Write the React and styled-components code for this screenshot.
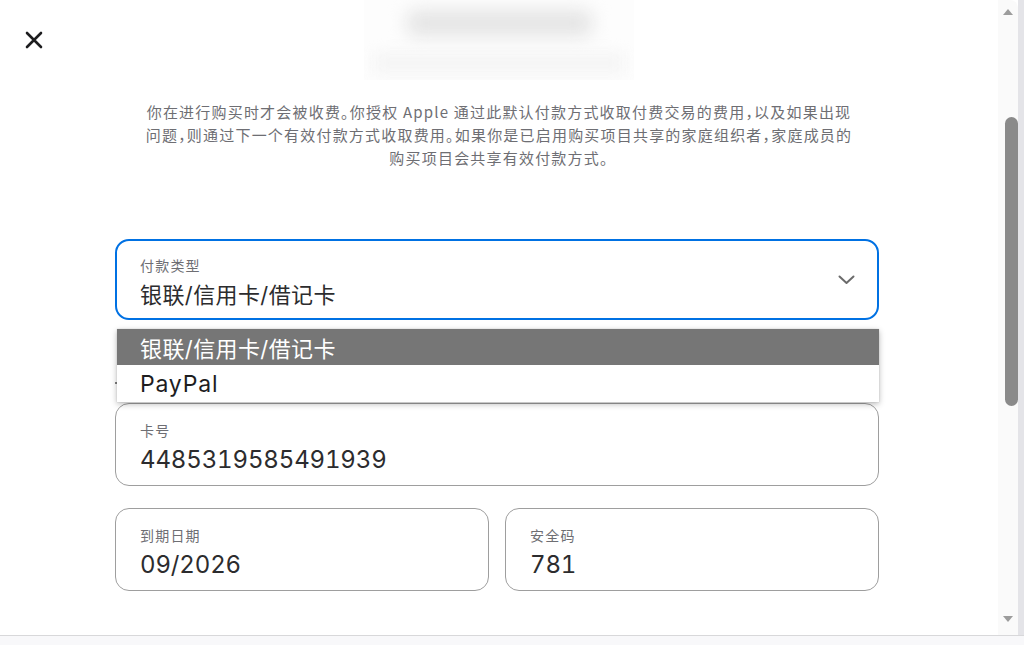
import React from "react";
import styled, { createGlobalStyle } from "styled-components";

const GlobalStyle = createGlobalStyle`
  html, body { margin: 0; padding: 0; background: #ffffff; overflow: hidden; }
  * { box-sizing: border-box; }
  body { font-family: "Inter", "Noto Sans CJK SC", sans-serif; color: #1d1d1f; }
`;

const Window = styled.div`
  width: 1024px;
  height: 645px;
  display: flex;
  flex-direction: column;
  background: #ffffff;
`;

const Main = styled.div`
  flex: 1;
  display: flex;
  min-height: 0;
`;

const Content = styled.div`
  flex: 1;
  display: flex;
  flex-direction: column;
  min-width: 0;
`;

const Header = styled.div`
  height: 80px;
  display: grid;
  grid-template-columns: 1fr 270px 1fr;
  align-items: start;
`;

const CloseButton = styled.button`
  width: 28px;
  height: 28px;
  margin: 26px 0 0 20px;
  padding: 0;
  border: none;
  background: transparent;
  display: flex;
  align-items: center;
  justify-content: center;
  cursor: pointer;
`;

const BlurZone = styled.div`
  height: 80px;
  overflow: hidden;
  background: #fdfdfd;
`;

const BlurBar = styled.div`
  margin: 10px auto 0;
  width: 185px;
  height: 26px;
  border-radius: 8px;
  background: #e4e4e4;
  filter: blur(9px);
`;

const BlurSub = styled.div`
  margin: 16px auto 0;
  width: 250px;
  height: 22px;
  background: #f5f5f5;
  filter: blur(7px);
`;

const Notice = styled.p`
  margin: 20px auto 0;
  width: 715px;
  text-align: center;
  font-size: 15px;
  line-height: 23px;
  letter-spacing: 1.2px;
  color: #6e6e73;
  font-family: "Noto Sans CJK SC", sans-serif;
  font-feature-settings: "halt";
`;

const Form = styled.div`
  margin: 70px 119px 0 115px;
  display: flex;
  flex-direction: column;
`;

const SelectWrap = styled.div`
  position: relative;
`;

const Field = styled.div`
  height: ${(p) => (p.$focused ? "81px" : "83px")};
  border: ${(p) => (p.$focused ? "2px solid #0071e3" : "1px solid #9e9e9e")};
  border-radius: 14px;
  padding: ${(p) => (p.$focused ? "15px 23px 0" : "17px 24px 0")};
  display: flex;
  align-items: center;
  gap: 12px;
  background: #ffffff;
  flex: 1;
`;

const FieldText = styled.div`
  flex: 1;
  display: flex;
  flex-direction: column;
  align-self: flex-start;
`;

const Label = styled.div`
  font-family: "Noto Sans CJK SC", sans-serif;
  font-size: 14px;
  line-height: 18px;
  letter-spacing: 1.2px;
  color: #6e6e73;
`;

const Value = styled.div`
  margin-top: 6px;
  font-family: "Inter", "Noto Sans CJK SC", sans-serif;
  font-size: ${(p) => (p.$digits ? "24px" : "22px")};
  line-height: 30px;
  font-variant-numeric: tabular-nums;
  letter-spacing: ${(p) => (p.$digits ? "-0.15px" : "0.4px")};
  color: #2c2c2e;
`;

const Chevron = styled.span`
  display: flex;
  margin: 0 -1px 14px 0;
`;

const Menu = styled.ul`
  position: absolute;
  left: 2px;
  right: 0;
  top: 90px;
  margin: 0;
  padding: 0;
  list-style: none;
  background: #ffffff;
  box-shadow: 0 2px 6px rgba(0, 0, 0, 0.28), 0 0 1px rgba(0, 0, 0, 0.2);
  z-index: 2;
`;

const MenuItem = styled.li`
  height: ${(p) => (p.$active ? "36px" : "37px")};
  padding-left: 23px;
  display: flex;
  align-items: center;
  font-size: ${(p) => (p.$active ? "22px" : "23px")};
  letter-spacing: ${(p) => (p.$active ? "0.4px" : "0.8px")};
  font-family: "Inter", "Noto Sans CJK SC", sans-serif;
  background: ${(p) => (p.$active ? "#767676" : "#ffffff")};
  color: ${(p) => (p.$active ? "#ffffff" : "#1d1d1f")};
`;

const HiddenRow = styled.div`
  height: 83px;
  position: relative;
`;

const Dot = styled.span`
  position: absolute;
  left: 0;
  top: 62px;
  width: 2px;
  height: 2px;
  border-radius: 1px;
  background: #555;
`;

const Row = styled.div`
  display: flex;
  gap: 16px;
  margin-top: ${(p) => p.$gap || 0}px;
`;

const ScrollCol = styled.div`
  width: 26px;
  display: flex;
`;

const Track = styled.div`
  width: 20px;
  background: #fafafa;
  border-top-right-radius: 8px;
  display: flex;
  flex-direction: column;
  align-items: center;
  padding-top: 9px;
`;

const Edge = styled.div`
  width: 6px;
  background: #e4e4e8;
`;

const Arrow = styled.div`
  width: 0;
  height: 0;
  border-left: 5px solid transparent;
  border-right: 5px solid transparent;
  ${(p) =>
    p.$down
      ? "border-top: 6px solid #9c9c9c; margin-top: auto; margin-bottom: 13px;"
      : "border-bottom: 6px solid #9c9c9c;"}
`;

const Thumb = styled.div`
  margin-top: 102px;
  width: 13px;
  height: 289px;
  border-radius: 7px;
  background: #8a8a8a;
  margin-left: 6px;
`;

const Footer = styled.div`
  height: 10px;
  border-top: 1px solid #d8d8da;
  background: #f8f8fa;
`;

const CloseIcon = () => (
  <svg width="18" height="18" viewBox="0 0 18 18">
    <path d="M2 2 L16 16 M16 2 L2 16" stroke="#1d1d1f" strokeWidth="2.6" strokeLinecap="round" />
  </svg>
);

const ChevronIcon = () => (
  <svg width="17" height="10" viewBox="0 0 17 10">
    <path d="M1.5 1.5 L8.5 8 L15.5 1.5" stroke="#6b6b6b" strokeWidth="2" fill="none" strokeLinecap="round" strokeLinejoin="round" />
  </svg>
);

export default function App() {
  return (
    <>
      <GlobalStyle />
      <Window>
        <Main>
          <Content>
            <Header>
              <CloseButton aria-label="关闭">
                <CloseIcon />
              </CloseButton>
              <BlurZone>
                <BlurBar />
                <BlurSub />
              </BlurZone>
              <div />
            </Header>
            <Notice>
              你在进行购买时才会被收费。你授权 Apple 通过此默认付款方式收取付费交易的费用，以及如果出现问题，则通过下一个有效付款方式收取费用。如果你是已启用购买项目共享的家庭组织者，家庭成员的购买项目会共享有效付款方式。
            </Notice>
            <Form>
              <SelectWrap>
                <Field $focused>
                  <FieldText>
                    <Label>付款类型</Label>
                    <Value>银联/信用卡/借记卡</Value>
                  </FieldText>
                  <Chevron>
                    <ChevronIcon />
                  </Chevron>
                </Field>
                <Menu>
                  <MenuItem $active>银联/信用卡/借记卡</MenuItem>
                  <MenuItem>PayPal</MenuItem>
                </Menu>
              </SelectWrap>
              <HiddenRow>
                <Dot />
              </HiddenRow>
              <Row>
                <Field>
                  <FieldText>
                    <Label>卡号</Label>
                    <Value $digits>4485319585491939</Value>
                  </FieldText>
                </Field>
              </Row>
              <Row $gap={22}>
                <Field>
                  <FieldText>
                    <Label>到期日期</Label>
                    <Value $digits>09/2026</Value>
                  </FieldText>
                </Field>
                <Field>
                  <FieldText>
                    <Label>安全码</Label>
                    <Value $digits>781</Value>
                  </FieldText>
                </Field>
              </Row>
            </Form>
          </Content>
          <ScrollCol>
            <Track>
              <Arrow />
              <Thumb />
              <Arrow $down />
            </Track>
            <Edge />
          </ScrollCol>
        </Main>
        <Footer />
      </Window>
    </>
  );
}
